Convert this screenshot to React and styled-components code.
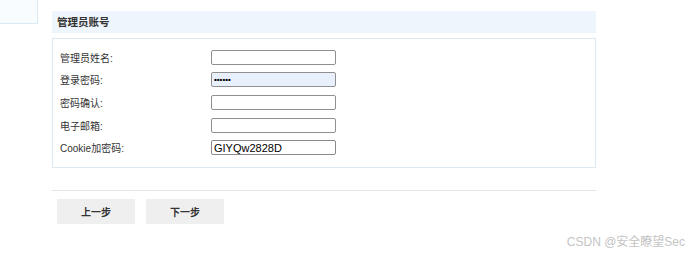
import React from "react";
import styled, { createGlobalStyle } from "styled-components";

const fields = [
  { label: "管理员姓名:", type: "text", value: "" },
  { label: "登录密码:", type: "password", value: "••••••", filled: true },
  { label: "密码确认:", type: "text", value: "" },
  { label: "电子邮箱:", type: "text", value: "" },
  { label: "Cookie加密码:", type: "text", value: "GIYQw2828D", dark: true },
];

function App() {
  return (
    <>
      <GlobalStyle />
      <Page>
        <SideBox />
        <Main>
          <Header>管理员账号</Header>
          <FormBox>
            {fields.map((f) => (
              <Row key={f.label}>
                <Label>{f.label}</Label>
                <Input
                  readOnly
                  value={f.value}
                  $filled={f.filled}
                  $dark={f.dark}
                  $dots={f.type === "password"}
                />
              </Row>
            ))}
          </FormBox>
          <Divider />
          <Buttons>
            <Button>上一步</Button>
            <Button>下一步</Button>
          </Buttons>
        </Main>
        <Watermark>CSDN @安全瞭望Sec</Watermark>
      </Page>
    </>
  );
}

const GlobalStyle = createGlobalStyle`
  body {
    margin: 0;
    background: #fff;
    font-family: "Liberation Sans", "Noto Sans CJK SC", sans-serif;
  }
`;

const Page = styled.div`
  position: relative;
  display: flex;
  width: 692px;
  height: 256px;
  overflow: hidden;
`;

const SideBox = styled.div`
  width: 37px;
  height: 23px;
  background: #f9fcfe;
  border-right: 1px solid #d9eaf5;
  border-bottom: 1px solid #d9eaf5;
  flex-shrink: 0;
`;

const Main = styled.div`
  width: 544px;
  margin-left: 14px;
  padding-top: 11px;
`;

const Header = styled.div`
  height: 22px;
  line-height: 23px;
  padding-left: 5px;
  background: #eef5fc;
  color: #333;
  font-size: 10.5px;
  font-weight: bold;
`;

const FormBox = styled.div`
  margin-top: 5px;
  border: 1px solid #dde9f1;
  padding: 7px 0 8px 7px;
`;

const Row = styled.div`
  display: flex;
  align-items: center;
  height: 22.67px;
`;

const Label = styled.div`
  width: 151px;
  font-size: 10px;
  color: #333;
`;

const Input = styled.input`
  box-sizing: border-box;
  width: 125px;
  height: 15px;
  margin: 0;
  padding: 0 2px;
  border: 1px solid ${(p) => (p.$dark ? "#8a8a8a" : "#8f8f8f")};
  border-radius: 2px;
  background: ${(p) => (p.$filled ? "#e8f0fe" : "#fff")};
  font-family: "Liberation Sans", sans-serif;
  font-size: ${(p) => (p.$dots ? "8px" : "11px")};
  font-weight: ${(p) => (p.$dots ? "bold" : "normal")};
  color: #000;
  outline: none;
`;

const Divider = styled.div`
  margin-top: 22px;
  height: 1px;
  background: #e5e5e5;
`;

const Buttons = styled.div`
  display: flex;
  gap: 11px;
  margin-top: 8px;
  padding-left: 5px;
`;

const Button = styled.button`
  width: 78px;
  height: 25px;
  border: none;
  background: #efefef;
  color: #333;
  font-family: "Liberation Sans", "Noto Sans CJK SC", sans-serif;
  font-size: 10px;
  font-weight: bold;
  padding: 0;
`;

const Watermark = styled.div`
  position: absolute;
  right: 7px;
  bottom: 7px;
  font-size: 12px;
  color: #c4c4c4;
`;

export default App;
